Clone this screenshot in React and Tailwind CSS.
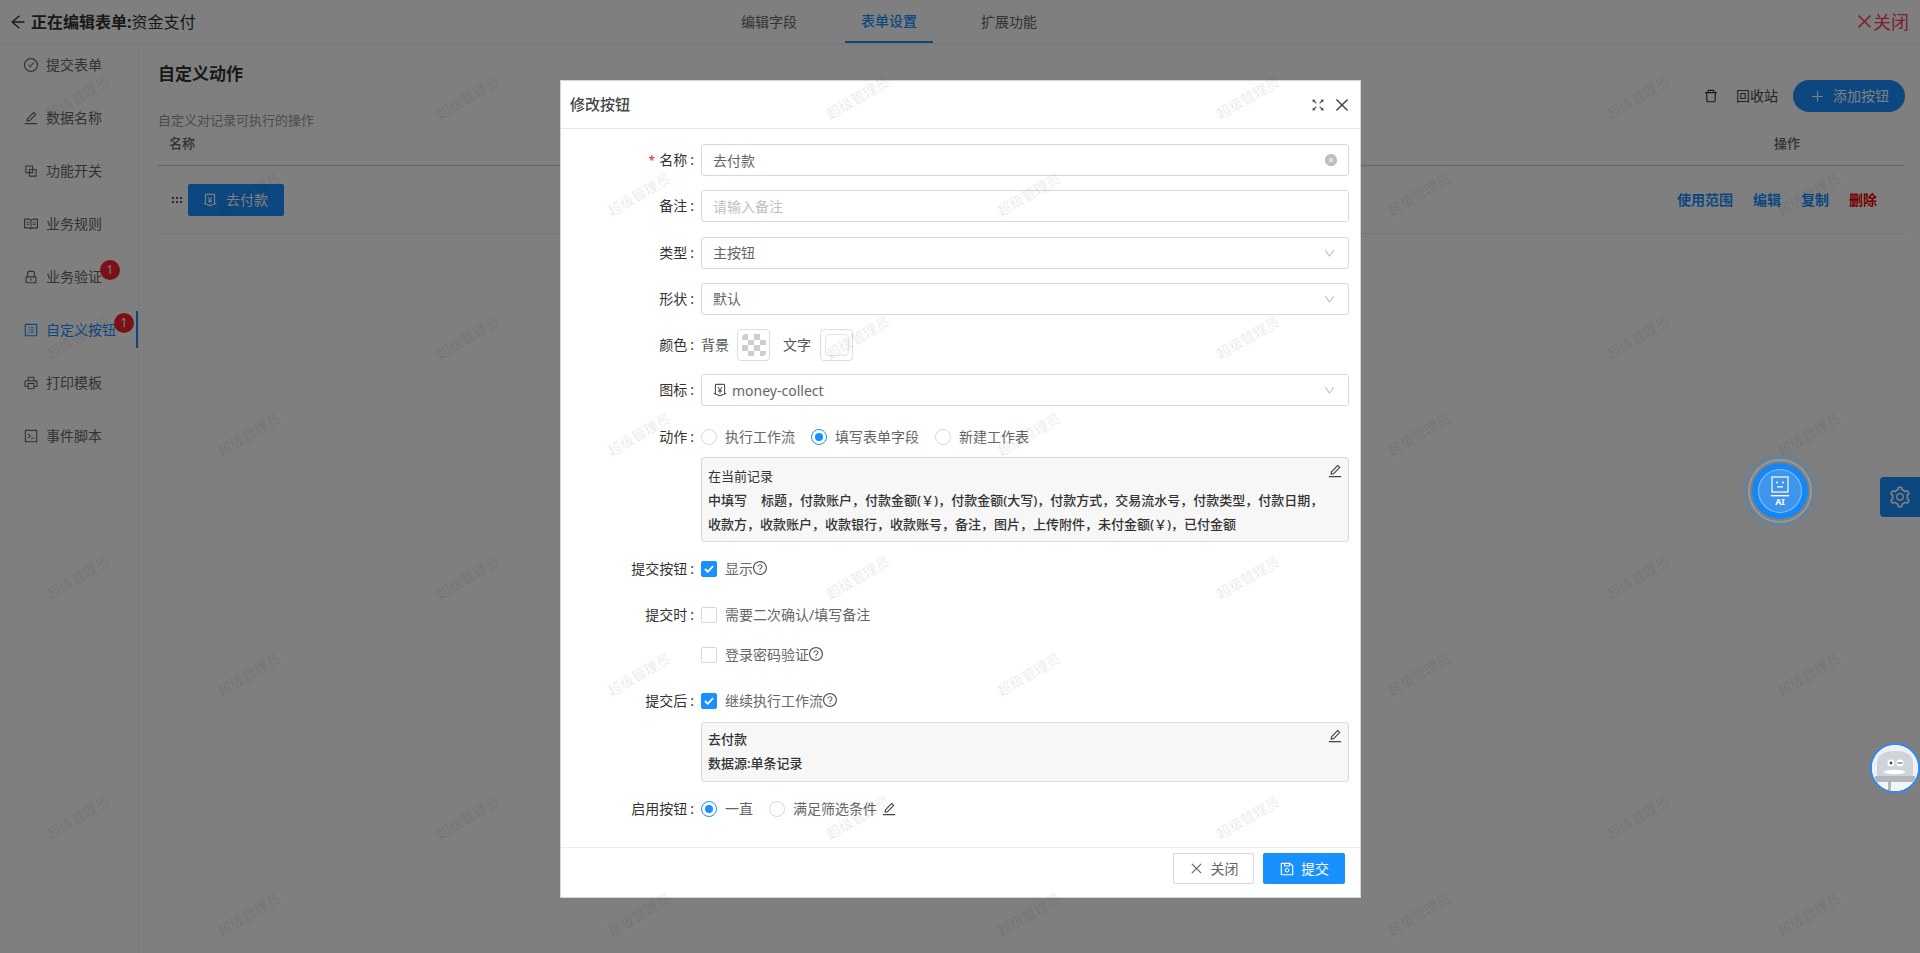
import React from 'react';
import {
  AiOutlineArrowLeft,
  AiOutlineCheckCircle,
  AiOutlineEdit,
  AiOutlineBlock,
  AiOutlineRead,
  AiOutlineLock,
  AiOutlineProfile,
  AiOutlinePrinter,
  AiOutlineCode,
  AiOutlineDelete,
  AiOutlinePlus,
  AiOutlineMoneyCollect,
  AiOutlineClose,
  AiOutlineFullscreen,
  AiFillCloseCircle,
  AiOutlineDown,
  AiOutlineQuestionCircle,
  AiOutlineSave,
  AiOutlineSetting,
} from 'react-icons/ai';

const menu = [
  { name: '提交表单', icon: AiOutlineCheckCircle },
  { name: '数据名称', icon: AiOutlineEdit },
  { name: '功能开关', icon: AiOutlineBlock },
  { name: '业务规则', icon: AiOutlineRead },
  { name: '业务验证', icon: AiOutlineLock, badge: 'left-[100px] top-[2px]' },
  { name: '自定义按钮', icon: AiOutlineProfile, active: true, badge: 'left-[114px] top-[2px]' },
  { name: '打印模板', icon: AiOutlinePrinter },
  { name: '事件脚本', icon: AiOutlineCode },
];

const watermarkSpots = [];
[98, 338, 578, 818].forEach((y) => {
  for (let x = 78; x < 1920; x += 390) watermarkSpots.push({ x, y });
});
[195, 435, 675, 915].forEach((y) => {
  for (let x = 249; x < 1920; x += 390) watermarkSpots.push({ x, y });
});

const Label = ({ text, required }) => (
  <div className="w-[140px] shrink-0 pr-[7px] text-right text-sm text-[#333] leading-[22px]">
    {required && <span className="mr-[4px] text-xs text-[#f5222d]">*</span>}
    {text}
    {text && <span className="ml-[3px]">:</span>}
  </div>
);

const FormRow = ({ label, required, className, children }) => (
  <div className={`flex items-center pr-[11px] ${className}`}>
    <Label text={label} required={required} />
    <div className="flex min-w-0 flex-1 items-center">{children}</div>
  </div>
);

const SelectBox = ({ children }) => (
  <div className="flex h-[32px] w-full items-center justify-between rounded-[3px] border border-[#d9d9d9] pl-[11px] pr-[12px] text-sm text-[#666]">
    <div className="flex items-center">{children}</div>
    <AiOutlineDown size={13} className="text-[#bfbfbf]" />
  </div>
);

const Radio = ({ checked, text, className }) => (
  <div className={`flex items-center ${className || ''}`}>
    <span
      className={`flex h-[16px] w-[16px] items-center justify-center rounded-full border ${
        checked ? 'border-[#1890ff]' : 'border-[#d9d9d9]'
      }`}
    >
      {checked && <span className="h-[8px] w-[8px] rounded-full bg-[#1890ff]" />}
    </span>
    <span className="ml-[8px] text-sm text-[#666]">{text}</span>
  </div>
);

const Checkbox = ({ checked, text, help }) => (
  <div className="flex items-center">
    <span
      className={`flex h-[16px] w-[16px] items-center justify-center rounded-[2px] border ${
        checked ? 'border-[#1890ff] bg-[#1890ff]' : 'border-[#d9d9d9] bg-white'
      }`}
    >
      {checked && (
        <svg width="10" height="8" viewBox="0 0 10 8" fill="none">
          <path d="M1 4l2.8 2.8L9 1.2" stroke="white" strokeWidth="1.8" />
        </svg>
      )}
    </span>
    <span className="ml-[8px] text-sm text-[#666]">{text}</span>
    {help && <AiOutlineQuestionCircle size={16} className="-ml-[1px] -mt-[2px] text-[#555]" />}
  </div>
);

const InfoBox = ({ className, children }) => (
  <div className={`relative w-full rounded-[3px] border border-[#d9d9d9] bg-[#f7f7f7] px-[6px] pt-[6px] text-[13px] leading-[24px] text-[#333] ${className}`}>
    <AiOutlineEdit size={16} className="absolute right-[5px] top-[5px] text-[#444]" />
    {children}
  </div>
);

const checks = [0, 1, 0, 1, 1, 0, 1, 0, 0, 1, 0, 1, 1, 0, 1, 0];

const Checker = () => (
  <div className="grid h-[22px] w-[24px] grid-cols-4 grid-rows-4 overflow-hidden rounded-[4px]">
    {checks.map((c, i) => (
      <span key={i} className={c === 0 ? 'bg-[#cbcfcb]' : 'bg-white'} />
    ))}
  </div>
);

const Swatch = ({ children }) => (
  <div className="flex h-[32px] w-[33px] items-center justify-center rounded-[4px] border border-[#dcdce4]">
    {children}
  </div>
);

const Robot = () => (
  <svg width="20" height="21" viewBox="0 0 20 21" fill="none">
    <rect x="2" y="1" width="16" height="15" stroke="white" strokeWidth="1.2" />
    <circle cx="7" cy="6.5" r="1" fill="white" />
    <circle cx="13" cy="6.5" r="1" fill="white" />
    <rect x="7" y="10" width="6" height="1.6" fill="white" opacity="0.8" />
    <rect x="1" y="19" width="18" height="1.4" fill="white" />
  </svg>
);

const Penguin = () => (
  <svg width="46" height="46" viewBox="2 2 46 46">
    <rect width="50" height="50" fill="#eef0f4" />
    <path d="M7 36V20C7 11 15 8 25 8s18 3 18 12v16z" fill="#d0d4da" />
    <circle cx="21" cy="20" r="3.6" fill="white" />
    <circle cx="21" cy="20" r="1.4" fill="#444" />
    <circle cx="30" cy="20" r="3.6" fill="white" />
    <path d="M27.5 20h5" stroke="#555" strokeWidth="1.2" />
    <ellipse cx="24.5" cy="29" rx="11" ry="2.2" fill="white" />
    <rect x="5" y="33" width="40" height="6" fill="#b4b8be" />
    <rect x="10" y="39" width="30" height="11" fill="#f4f5f7" />
    <rect x="18" y="39" width="3" height="11" fill="#b4b8be" />
  </svg>
);

export default function App() {
  return (
    <div className="relative h-[953px] w-[1920px] overflow-hidden bg-white font-['Noto_Sans','Noto_Sans_CJK_SC',sans-serif] text-[#333]">
      {/* page behind the mask */}
      <div className="flex h-[44px] items-center border-b border-[#eee]">
        <div className="flex w-[725px] items-center pl-[9px]">
          <AiOutlineArrowLeft size={18} className="mr-[4px] text-[#333]" />
          <span className="text-base font-bold">正在编辑表单:</span>
          <span className="text-base">资金支付</span>
        </div>
        <div className="flex h-full gap-[32px] text-sm text-[#666]">
          <div className="flex w-[88px] items-center justify-center">编辑字段</div>
          <div className="flex w-[88px] items-center justify-center border-b-2 border-[#1890ff] font-medium text-[#1890ff]">表单设置</div>
          <div className="flex w-[88px] items-center justify-center">扩展功能</div>
        </div>
        <div className="flex flex-1 items-center justify-end pr-[11px] text-lg text-[#f5475a]">
          <AiOutlineClose size={19} className="-mr-[1px]" />
          关闭
        </div>
      </div>

      <div className="flex h-[909px]">
        <div className="flex w-[139px] shrink-0 flex-col gap-[16px] border-r border-[#eee] pt-[2px]">
          {menu.map((item) => {
            const Icon = item.icon;
            return (
              <div
                key={item.name}
                className={`relative flex h-[37px] items-center gap-[7px] pl-[23px] text-sm ${
                  item.active ? 'border-r-2 border-[#1890ff] text-[#1890ff]' : 'text-[#666]'
                }`}
              >
                <Icon size={16} />
                <span>{item.name}</span>
                {item.badge && (
                  <span className={`absolute flex h-[20px] w-[20px] items-center justify-center rounded-full bg-[#f5222d] text-xs text-white ${item.badge}`}>
                    1
                  </span>
                )}
              </div>
            );
          })}
        </div>

        <div className="min-w-0 flex-1 pl-[19px] pr-[15px] pt-[20px]">
          <div className="flex h-[47px] items-start justify-between">
            <h2 className="text-[17px] font-bold leading-[20px] text-[#333]">自定义动作</h2>
            <div className="mt-[16px] flex h-[32px] items-center">
              <AiOutlineDelete size={16} className="mr-[17px] text-[#333]" />
              <span className="mr-[15px] text-sm text-[#444]">回收站</span>
              <div className="flex h-[32px] w-[112px] items-center rounded-full bg-[#1890ff] pl-[17px] text-sm text-white">
                <AiOutlinePlus size={15} className="mr-[8px]" />
                添加按钮
              </div>
            </div>
          </div>
          <p className="text-[13px] leading-[18px] text-[#999]">自定义对记录可执行的操作</p>
          <div className="flex h-[37px] items-start justify-between border-b border-[#ccc] pl-[11px] pr-[105px] pt-[4px] text-[13px] font-medium leading-[20px] text-[#666]">
            <span>名称</span>
            <span>操作</span>
          </div>
          <div className="flex h-[68px] items-center justify-between border-b border-[#eee] pr-[28px]">
            <div className="flex items-center pl-[14px]">
              <svg width="10" height="6" viewBox="0 0 10 6" fill="#555" className="mr-[6px]">
                <rect x="0" y="0" width="2" height="2" />
                <rect x="4" y="0" width="2" height="2" />
                <rect x="8" y="0" width="2" height="2" />
                <rect x="0" y="4" width="2" height="2" />
                <rect x="4" y="4" width="2" height="2" />
                <rect x="8" y="4" width="2" height="2" />
              </svg>
              <div className="flex h-[32px] w-[96px] items-center rounded-[2px] bg-[#1890ff] pl-[14px] text-sm text-white">
                <AiOutlineMoneyCollect size={16} className="mr-[8px]" />
                去付款
              </div>
            </div>
            <div className="flex gap-[20px] text-sm font-semibold text-[#1890ff]">
              <span>使用范围</span>
              <span>编辑</span>
              <span>复制</span>
              <span className="text-[#e60000]">删除</span>
            </div>
          </div>
        </div>
      </div>

      <div className="absolute right-0 top-[477px] flex h-[40px] w-[40px] items-center justify-center rounded-l-[4px] bg-[#1890ff] text-white">
        <AiOutlineSetting size={24} />
      </div>

      {/* mask + modal */}
      <div className="absolute inset-0 bg-black/50">
        <div className="ml-[560px] mt-[80px] flex h-[818px] w-[801px] flex-col border border-[#d4d4d4] bg-white">
          <div className="flex h-[48px] shrink-0 items-center justify-between border-b border-[#e6e6f0] pl-[9px] pr-[9px]">
            <span className="text-[15px] font-medium text-[#444]">修改按钮</span>
            <div className="flex items-center gap-[7px] text-[#444]">
              <AiOutlineFullscreen size={16} />
              <AiOutlineClose size={18} />
            </div>
          </div>

          <div className="flex-1">
            <FormRow label="名称" required className="mt-[15px]">
              <div className="flex h-[32px] w-full items-center justify-between rounded-[3px] border border-[#d9d9d9] pl-[11px] pr-[10px] pt-[2px] text-sm text-[#666]">
                去付款
                <AiFillCloseCircle size={14} className="-mt-[2px] text-[#bfbfbf]" />
              </div>
            </FormRow>
            <FormRow label="备注" className="mt-[14px]">
              <div className="flex h-[32px] w-full items-center rounded-[3px] border border-[#d9d9d9] pl-[11px] pt-[2px] text-sm text-[#bfbfbf]">
                请输入备注
              </div>
            </FormRow>
            <FormRow label="类型" className="mt-[15px]">
              <SelectBox>主按钮</SelectBox>
            </FormRow>
            <FormRow label="形状" className="mt-[14px]">
              <SelectBox>默认</SelectBox>
            </FormRow>
            <FormRow label="颜色" className="mt-[14px]">
              <span className="mr-[8px] text-sm text-[#555]">背景</span>
              <Swatch>
                <Checker />
              </Swatch>
              <span className="ml-[13px] mr-[9px] text-sm text-[#555]">文字</span>
              <Swatch>
                <div className="h-[22px] w-[24px] rounded-[4px] border border-[#e4e4ea]" />
              </Swatch>
            </FormRow>
            <FormRow label="图标" className="mt-[13px]">
              <SelectBox>
                <AiOutlineMoneyCollect size={16} className="-ml-[1px] mr-[4px] text-[#555]" />
                <span className="pt-[2px]">money-collect</span>
              </SelectBox>
            </FormRow>
            <FormRow label="动作" className="mt-[15px] h-[32px]">
              <Radio text="执行工作流" className="mr-[16px]" />
              <Radio text="填写表单字段" checked className="mr-[16px]" />
              <Radio text="新建工作表" />
            </FormRow>
            <FormRow label="" className="mt-[4px]">
              <InfoBox className="h-[85px]">
                <div>在当前记录</div>
                <div className="font-medium">中填写<span className="ml-[14px]">标题，付款账户，付款金额(￥)，付款金额(大写)，付款方式，交易流水号，付款类型，付款日期，</span></div>
                <div className="font-medium">收款方，收款账户，收款银行，收款账号，备注，图片，上传附件，未付金额(￥)，已付金额</div>
              </InfoBox>
            </FormRow>
            <FormRow label="提交按钮" className="mt-[11px] h-[32px]">
              <Checkbox checked text="显示" help />
            </FormRow>
            <FormRow label="提交时" className="mt-[14px] h-[32px]">
              <Checkbox text="需要二次确认/填写备注" />
            </FormRow>
            <FormRow label="" className="mt-[8px] h-[32px]">
              <Checkbox text="登录密码验证" help />
            </FormRow>
            <FormRow label="提交后" className="mt-[14px] h-[32px]">
              <Checkbox checked text="继续执行工作流" help />
            </FormRow>
            <FormRow label="" className="mt-[5px]">
              <InfoBox className="h-[60px] font-medium">
                <div className="-mt-[2px]">去付款</div>
                <div>数据源:单条记录</div>
              </InfoBox>
            </FormRow>
            <FormRow label="启用按钮" className="mt-[11px] h-[32px]">
              <Radio text="一直" checked className="mr-[16px]" />
              <Radio text="满足筛选条件" />
              <AiOutlineEdit size={16} className="ml-[4px] text-[#444]" />
            </FormRow>
          </div>

          <div className="flex h-[50px] shrink-0 items-start justify-end gap-[9px] border-t border-[#eee] pr-[15px] pt-[5px]">
            <div className="flex h-[31px] w-[81px] items-center justify-center rounded-[2px] border border-[#d9d9d9] text-sm text-[#666]">
              <AiOutlineClose size={15} className="mr-[7px]" />
              关闭
            </div>
            <div className="flex h-[31px] w-[82px] items-center justify-center rounded-[2px] bg-[#1890ff] text-sm text-white">
              <AiOutlineSave size={16} className="mr-[6px]" />
              提交
            </div>
          </div>
        </div>
      </div>

      {/* floating buttons stay above the mask */}
      <div className="absolute left-[1748px] top-[459px] flex h-[64px] w-[64px] items-center justify-center rounded-full border-2 border-white/20 shadow-[0_0_8px_rgba(24,144,255,0.5)]">
        <div className="flex h-[56px] w-[56px] items-center justify-center rounded-full bg-[#1587f5]">
          <div className="flex h-[44px] w-[44px] flex-col items-center justify-center rounded-full border border-white/40 bg-[#3d95ee]">
            <Robot />
            <span className="text-[9px] font-bold leading-[9px] text-white">AI</span>
          </div>
        </div>
      </div>
      <div className="absolute left-[1870px] top-[743px] h-[50px] w-[50px] overflow-hidden rounded-full border-2 border-[#2b8cf7] bg-white">
        <Penguin />
      </div>

      {/* watermark */}
      <div className="pointer-events-none absolute inset-0 overflow-hidden">
        {watermarkSpots.map((spot) => (
          <span
            key={`${spot.x}-${spot.y}`}
            className="absolute -translate-x-1/2 -translate-y-1/2 -rotate-[30deg] whitespace-nowrap text-sm text-black/10"
            style={{ left: spot.x, top: spot.y }}
          >
            超级管理员
          </span>
        ))}
      </div>
    </div>
  );
}
